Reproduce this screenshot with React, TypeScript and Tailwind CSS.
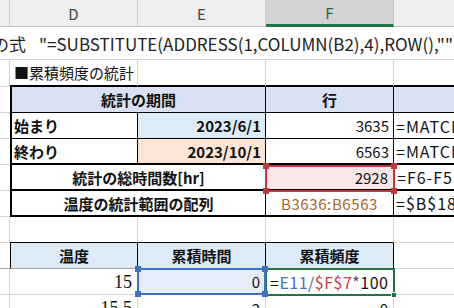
import React from 'react';

const g = 'border-[#d4d4d4]';

export default function App() {
  return (
    <div className="w-[454px] h-[308px] overflow-hidden bg-white font-['Noto_Sans_CJK_JP',sans-serif] text-[15px] text-[#111] leading-none">
      {/* column headers */}
      <div className="flex h-[27px] bg-[#efefef] text-[#444] border-b border-[#c6c6c6]">
        <div className="w-[10px] shrink-0 border-r border-[#d0d0d0]" />
        <div className="w-[128px] shrink-0 border-r border-[#d0d0d0] flex items-center justify-center">D</div>
        <div className="w-[128px] shrink-0 border-r border-[#d0d0d0] flex items-center justify-center">E</div>
        <div className="w-[128px] shrink-0 -mb-px bg-[#d2d2d2] border-r border-[#c6c6c6] border-b-[3px] border-b-[#217346] text-[#1e6b41] flex items-center justify-center">F</div>
        <div className="flex-1" />
      </div>

      {/* overflowing formula text */}
      <div className={`h-[33px] border-b ${g} flex items-center overflow-hidden whitespace-nowrap text-[17px] text-[#222]`}>
        <span className="-ml-[8px] shrink-0">の式</span>
        <span className="ml-[13px] shrink-0">"=SUBSTITUTE(ADDRESS(1,COLUMN(B2),4),ROW(),""</span>
      </div>

      {/* title */}
      <div className="flex h-[27px]">
        <div className={`w-[10px] shrink-0 border-r border-b ${g}`} />
        <div className="w-[128px] shrink-0 border-r border-r-[#d4d4d4] border-b-2 border-b-black flex items-center pl-[4px] whitespace-nowrap">■累積頻度の統計</div>
        <div className="w-[128px] shrink-0 border-r border-r-[#d4d4d4] border-b-2 border-b-black" />
        <div className="w-[128px] shrink-0 border-r border-r-[#d4d4d4] border-b-2 border-b-black" />
        <div className="flex-1 border-b-2 border-b-black" />
      </div>

      {/* 統計の期間 */}
      <div className="flex h-[26px]">
        <div className={`w-[10px] shrink-0 border-b ${g}`} />
        <div className="w-[256px] shrink-0 bg-[#d9e1f2] border-l-2 border-r border-b border-black flex items-center justify-center font-bold">統計の期間</div>
        <div className="w-[128px] shrink-0 bg-[#d9e1f2] border-r border-b border-black flex items-center justify-center font-bold">行</div>
        <div className="flex-1 bg-[#d9e1f2] border-b border-black" />
      </div>

      {/* 始まり */}
      <div className="flex h-[26px]">
        <div className={`w-[10px] shrink-0 border-b ${g}`} />
        <div className="w-[128px] shrink-0 border-l-2 border-r border-b border-black flex items-center pl-[2px] font-bold">始まり</div>
        <div className="w-[128px] shrink-0 bg-[#ddebf7] border-r border-b border-black flex items-center justify-end pr-[4px] font-bold">2023/6/1</div>
        <div className="w-[128px] shrink-0 border-r border-b border-black flex items-center justify-end pr-[4px]">3635</div>
        <div className="flex-1 border-b border-black flex items-center pl-[2px] whitespace-nowrap overflow-hidden text-[16px] tracking-[1px]">=MATCH(E5,B:B,0)</div>
      </div>

      {/* 終わり */}
      <div className="flex h-[26px]">
        <div className={`w-[10px] shrink-0 border-b ${g}`} />
        <div className="w-[128px] shrink-0 border-l-2 border-r border-b-2 border-black flex items-center pl-[2px] font-bold">終わり</div>
        <div className="w-[128px] shrink-0 bg-[#fce4d6] border-r border-b-2 border-black flex items-center justify-end pr-[4px] font-bold">2023/10/1</div>
        <div className="w-[128px] shrink-0 border-r border-b-2 border-black flex items-center justify-end pr-[4px]">6563</div>
        <div className="flex-1 border-b-2 border-black flex items-center pl-[2px] whitespace-nowrap overflow-hidden text-[16px] tracking-[1px]">=MATCH(E6,B:B,0)</div>
      </div>

      {/* 統計の総時間数 */}
      <div className="flex h-[26px]">
        <div className={`w-[10px] shrink-0 border-b ${g}`} />
        <div className="w-[256px] shrink-0 border-l-2 border-r border-b-2 border-black flex items-center justify-center font-bold">統計の総時間数[hr]</div>
        <div className="relative w-[128px] shrink-0 bg-[#f9e7e7] border-r border-b-2 border-black flex items-center justify-end pr-[5px]">
          2928
          <div className="absolute -left-[1px] top-0 w-[130px] h-[27px] border-2 border-[#c3373f]">
            <div className="absolute -left-[4px] -top-[4px] w-[6px] h-[6px] bg-[#c3373f]" />
            <div className="absolute -right-[4px] -top-[4px] w-[6px] h-[6px] bg-[#c3373f]" />
            <div className="absolute -left-[4px] -bottom-[4px] w-[6px] h-[6px] bg-[#c3373f]" />
            <div className="absolute -right-[4px] -bottom-[4px] w-[6px] h-[6px] bg-[#c3373f]" />
          </div>
        </div>
        <div className="flex-1 border-b-2 border-black flex items-center pl-[3px] whitespace-nowrap overflow-hidden text-[16px] tracking-[1px]">=F6-F5</div>
      </div>

      {/* 温度の統計範囲の配列 */}
      <div className="flex h-[26px]">
        <div className={`w-[10px] shrink-0 border-b ${g}`} />
        <div className="w-[256px] shrink-0 border-l-2 border-r border-b-2 border-black flex items-center justify-center font-bold">温度の統計範囲の配列</div>
        <div className="w-[128px] shrink-0 border-r border-b-2 border-black flex items-center justify-center text-[#a8652a] tracking-[0.6px]">B3636:B6563</div>
        <div className="flex-1 border-b-2 border-black flex items-center pl-[2px] whitespace-nowrap overflow-hidden text-[16px] tracking-[1px]">=$B$18:$B$26</div>
      </div>

      {/* empty row */}
      <div className="flex h-[26px]">
        <div className={`w-[10px] shrink-0 border-r border-b ${g}`} />
        <div className="w-[128px] shrink-0 border-r border-r-[#d4d4d4] border-b border-b-black" />
        <div className="w-[128px] shrink-0 border-r border-r-[#d4d4d4] border-b border-b-black" />
        <div className="w-[128px] shrink-0 border-r border-r-[#d4d4d4] border-b border-b-black" />
        <div className={`flex-1 border-b ${g}`} />
      </div>

      {/* 温度 header */}
      <div className="flex h-[26px]">
        <div className="w-[10px] shrink-0 border-b border-[#a6a6a6]" />
        <div className="w-[128px] shrink-0 bg-[#ddebf7] border-l border-l-black border-r border-r-black border-b border-b-[#a6a6a6] flex items-center justify-center font-bold">温度</div>
        <div className="w-[128px] shrink-0 bg-[#ddebf7] border-r border-r-black border-b border-b-[#a6a6a6] flex items-center justify-center font-bold">累積時間</div>
        <div className="w-[128px] shrink-0 bg-[#ddebf7] border-r border-r-black border-b border-b-[#a6a6a6] flex items-center justify-center font-bold">累積頻度</div>
        <div className={`flex-1 border-b ${g}`} />
      </div>

      {/* 15 */}
      <div className="flex h-[26px]">
        <div className={`w-[10px] shrink-0 border-r border-b ${g}`} />
        <div className={`w-[128px] shrink-0 border-r border-b ${g} flex items-center justify-end pr-[5px] font-['Liberation_Serif',serif] text-[18px]`}>15</div>
        <div className={`relative z-20 w-[128px] shrink-0 bg-[#e5edf8] border-r border-b ${g} flex items-center justify-end pr-[5px]`}>
          0
          <div className="absolute -left-[1px] -top-[1px] w-[129px] h-[27px] border-2 border-[#3f6fc6]">
            <div className="absolute -left-[4px] -top-[4px] w-[6px] h-[6px] bg-[#3f6fc6]" />
            <div className="absolute -right-[4px] -top-[4px] w-[6px] h-[6px] bg-[#3f6fc6]" />
            <div className="absolute -left-[4px] -bottom-[4px] w-[6px] h-[6px] bg-[#3f6fc6]" />
            <div className="absolute -right-[4px] -bottom-[4px] w-[6px] h-[6px] bg-[#3f6fc6]" />
          </div>
        </div>
        <div className={`relative z-10 w-[128px] shrink-0 border-r border-b ${g} flex items-center pl-[4px] whitespace-nowrap text-[16px] tracking-[0.5px]`}>
          <span>=</span>
          <span className="text-[#4472c4]">E11</span>
          <span className="text-[#5b5b8a]">/</span>
          <span className="text-[#c8404a]">$F$7</span>
          <span className="text-[#5a3f6a]">*</span>
          <span>100</span>
          <div className="absolute -left-[1px] -top-[1px] w-[130px] h-[28px] border-2 border-[#217346]">
            <div className="absolute -right-[4px] -bottom-[4px] w-[6px] h-[6px] bg-[#217346] border border-white" />
          </div>
        </div>
        <div className={`flex-1 border-b ${g}`} />
      </div>

      {/* 15.5 */}
      <div className="flex h-[26px]">
        <div className={`w-[10px] shrink-0 border-r ${g}`} />
        <div className={`w-[128px] shrink-0 border-r ${g} flex items-center justify-end pr-[5px] font-['Liberation_Serif',serif] text-[18px]`}>15.5</div>
        <div className={`w-[128px] shrink-0 border-r ${g} flex items-center justify-end pr-[5px]`}>2</div>
        <div className={`w-[128px] shrink-0 border-r ${g} flex items-center justify-end pr-[5px]`}>0</div>
        <div className="flex-1" />
      </div>
    </div>
  );
}
